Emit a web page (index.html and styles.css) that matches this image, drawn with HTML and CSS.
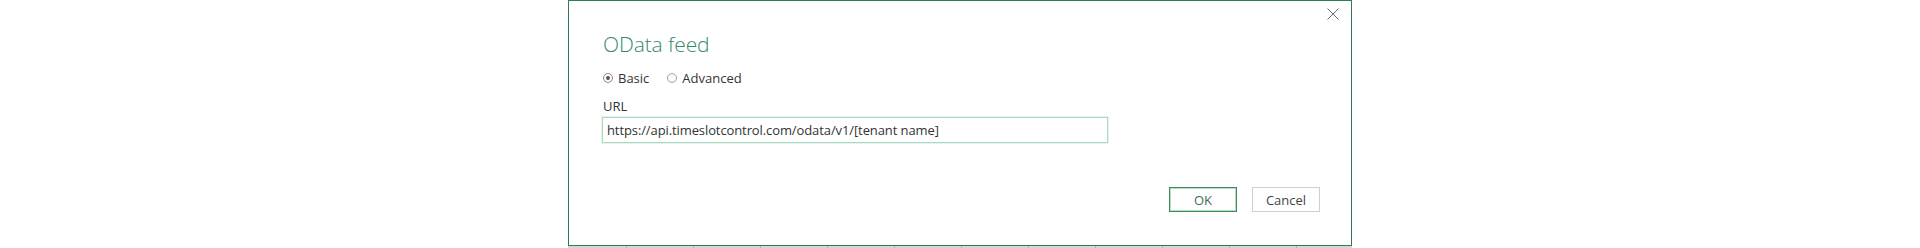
FILE: index.html
```html
<!DOCTYPE html>
<html lang="en">
<head>
<meta charset="utf-8">
<title>OData feed</title>
<link rel="stylesheet" href="styles.css">
</head>
<body>
<div class="stage">
  <div class="dialog">
    <button class="close" aria-label="Close">
      <svg width="12" height="12" viewBox="0 0 12 12"><path d="M0.5 0.5 L11.5 11.5 M11.5 0.5 L0.5 11.5" stroke="#6e6e6e" stroke-width="1" fill="none"/></svg>
    </button>
    <h1 class="title">OData feed</h1>
    <div class="modes">
      <label class="radio"><span class="dot checked"></span>Basic</label>
      <label class="radio"><span class="dot"></span>Advanced</label>
    </div>
    <div class="field-label">URL</div>
    <div class="input">https://api.timeslotcontrol.com/odata/v1/[tenant name]</div>
    <div class="actions">
      <button class="btn primary">OK</button>
      <button class="btn">Cancel</button>
    </div>
  </div>
  <div class="shadow"></div>
</div>
</body>
</html>
```
FILE: styles.css
```css
html, body {
  margin: 0;
  padding: 0;
  background: #ffffff;
}
body {
  font-family: "Open Sans", "Noto Sans", sans-serif;
  color: #333333;
  height: 248px;
  overflow: hidden;
}
.stage {
  width: 784px;
  margin: 0 auto;
}
.dialog {
  position: relative;
  box-sizing: border-box;
  height: 246px;
  border: 1px solid #2f7d4f;
  background: #ffffff;
  padding: 29px 31px 0 34px;
  display: flex;
  flex-direction: column;
  align-items: flex-start;
}
.shadow {
  height: 2px;
  background-color: #d3d8d5;
  background-image: repeating-linear-gradient(to right, transparent 0, transparent 58px, #b0b5b2 58px, #b0b5b2 59px, transparent 59px, transparent 67px);
}
.close {
  position: absolute;
  top: 7px;
  right: 12px;
  width: 12px;
  height: 12px;
  padding: 0;
  border: 0;
  background: none;
  display: flex;
}
.title {
  margin: 0;
  font-size: 21px;
  font-weight: 300;
  line-height: 28px;
  color: #35896c;
  letter-spacing: -0.1px;
}
.modes {
  margin-top: 11px;
  display: flex;
  gap: 18px;
  font-size: 13px;
  line-height: 18px;
}
.radio {
  display: flex;
  align-items: center;
  gap: 5px;
  color: #333333;
}
.dot {
  box-sizing: border-box;
  width: 10px;
  height: 10px;
  border: 1px solid #a0a0a0;
  border-radius: 50%;
  display: flex;
  align-items: center;
  justify-content: center;
}
.dot.checked {
  border-color: #8a8a8a;
}
.dot.checked::after {
  content: "";
  width: 4px;
  height: 4px;
  border-radius: 50%;
  background: #555555;
}
.field-label {
  margin-top: 10px;
  font-size: 13px;
  line-height: 18px;
  color: #333333;
}
.input {
  box-sizing: border-box;
  margin-top: 2px;
  margin-left: -1px;
  width: 506px;
  height: 26px;
  border: 1px solid #a9d9bf;
  box-shadow: 0 0 0 1px #e6f4ec;
  padding: 0 4px;
  font-size: 13px;
  line-height: 24px;
  letter-spacing: -0.1px;
  color: #333333;
  white-space: nowrap;
}
.actions {
  margin-top: 44px;
  align-self: stretch;
  display: flex;
  justify-content: flex-end;
  gap: 15px;
}
.btn {
  box-sizing: border-box;
  width: 68px;
  height: 25px;
  border: 1px solid #cfcfcf;
  background: #ffffff;
  font-family: "Open Sans", "Noto Sans", sans-serif;
  font-size: 13px;
  color: #444444;
  padding: 0;
}
.btn.primary {
  border-color: #3c8a5d;
  box-shadow: inset 0 0 0 1px #b9dcc8;
  color: #3a6e5a;
}
```
